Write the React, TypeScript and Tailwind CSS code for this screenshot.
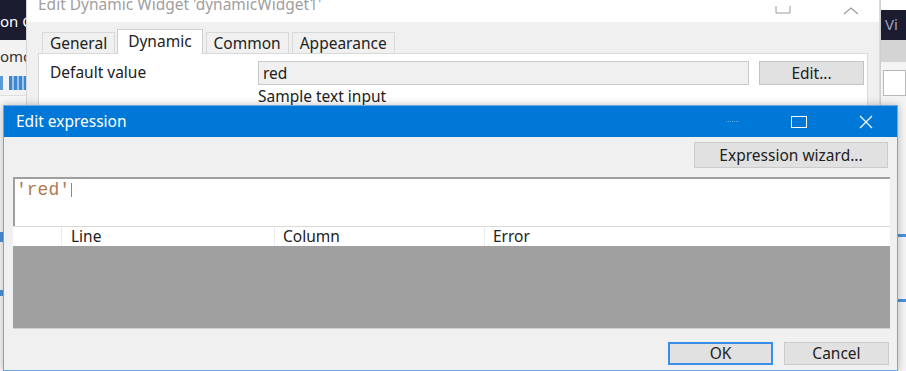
import React from 'react';

const ui = { fontFamily: '"Noto Sans", "Open Sans", Arial, sans-serif' };
const mono = { fontFamily: '"Liberation Mono", "Courier New", monospace' };

const tabs = ['General', 'Dynamic', 'Common', 'Appearance'];

const LeftStrip = () => (
  <div className="w-[27px] shrink-0 flex flex-col border-r border-[#d6d6d6] bg-[#f2f2f2] overflow-hidden">
    <div className="h-[40px] bg-[#1c1c30] flex items-center text-white text-[15px] whitespace-nowrap pt-[2px]">on C</div>
    <div className="h-[8px]" />
    <div className="text-[15px] leading-[16px] text-[#333] whitespace-nowrap">omc</div>
    <div className="h-[12px]" />
    <div className="flex gap-[6px] h-[14px]">
      <div className="w-[3px] bg-[#5b9bd5]" />
      <div className="flex-1 bg-[repeating-linear-gradient(90deg,#3f86d0_0_3px,#9cc3ea_3px_5px)]" />
    </div>
    <div className="flex-1 bg-[#f7f7f7] border-t border-[#e0e0e0] mt-[5px]">
      <div className="mt-[136px] h-[10px] w-[3px] bg-[#4a90d9]" />
      <div className="mt-[48px] h-[6px] w-[3px] bg-[#4a90d9]" />
    </div>
  </div>
);

const RightStrip = () => (
  <div className="w-[26px] shrink-0 flex flex-col bg-[#f4f4f4] overflow-hidden border-l border-[#d0d0d0]">
    <div className="h-[10px] bg-white" />
    <div className="h-[30px] bg-[#1c1c30] text-[#9aa0c0] text-[15px] pl-[4px] pt-[3px] whitespace-nowrap">Vi</div>
    <div className="h-[22px] bg-[#d4d4d4]" />
    <div className="h-[8px]" />
    <div className="h-[26px] ml-[2px] bg-white border border-[#b8b8b8]" />
    <div className="flex-1 flex flex-col items-end">
      <div className="mt-[138px] h-[3px] w-[9px] bg-[#4a90d9]" />
      <div className="mt-[62px] h-[3px] w-[9px] bg-[#4a90d9]" />
    </div>
  </div>
);

const BackDialog = () => (
  <div className="w-[853px] shrink-0 flex flex-col bg-[#f0f0f0] border-r border-[#dcdcdc]">
    <div className="h-[22px] bg-white flex items-start overflow-hidden">
      <div className="pl-[11px] -mt-[6px] text-[15.5px] leading-[20px] text-[#a0a0a0] whitespace-nowrap">Edit Dynamic Widget 'dynamicWidget1'</div>
      <div className="ml-auto flex items-start gap-[52px] pr-[20px]">
        <svg width="16" height="14" viewBox="0 0 16 14">
          <path d="M1 6 V13 H15 V6" fill="none" stroke="#9a9a9a" strokeWidth="1" />
        </svg>
        <svg width="16" height="8" viewBox="0 0 16 8" className="mt-[7px]">
          <path d="M1 7 L8 1 L15 7" fill="none" stroke="#9a9a9a" strokeWidth="1.2" />
        </svg>
      </div>
    </div>
    <div className="flex-1 px-[11px] pt-[6px]">
      <div className="flex items-end h-[25px] pl-[4px]">
        {tabs.map((t) =>
          t === 'Dynamic' ? (
            <div key={t} className="h-[25px] px-[10px] bg-white border border-b-0 border-[#cfcfcf] text-[15.5px] leading-[22px] text-[#222] -mb-px relative z-10 ml-[2px]">
              {t}
            </div>
          ) : (
            <div key={t} className="h-[21px] px-[7px] bg-[#f0f0f0] border border-b-0 border-[#d9d9d9] text-[15.5px] leading-[20px] text-[#222] ml-[3px] first:ml-0">
              {t}
            </div>
          )
        )}
      </div>
      <div className="bg-white border border-[#d9d9d9] h-[60px] flex flex-col">
        <div className="flex items-center pt-[7px]">
          <div className="w-[219px] pl-[11px] text-[15.5px] text-[#222]">Default value</div>
          <div className="w-[491px] h-[24px] bg-[#f0f0f0] border border-[#c9c9c9] text-[15.5px] leading-[22px] pl-[4px] text-[#222]">red</div>
          <div className="ml-[10px] w-[105px] h-[24px] bg-[#e1e1e1] border border-[#c4c4c4] text-[15.5px] leading-[22px] text-center text-[#222]">Edit...</div>
        </div>
        <div className="pl-[219px] pt-[1px] text-[15.5px] leading-[20px] text-[#222]">Sample text input</div>
      </div>
    </div>
  </div>
);

const EditExpression = () => (
  <div className="absolute left-[3px] top-[105px] w-[895px] h-[266px] flex flex-col bg-[#f0f0f0] border border-[#6aa8e4] shadow-[0_0_8px_rgba(0,0,0,0.25)]">
    <div className="h-[31px] shrink-0 bg-[#0078d7] flex items-center text-white">
      <div className="pl-[12px] text-[15.5px]">Edit expression</div>
      <div className="ml-auto flex items-center">
        <div className="w-[13px] border-t border-dotted border-[#5fa3e6] mr-[52px]" />
        <svg width="16" height="12" viewBox="0 0 16 12" className="mr-[52px]">
          <rect x="0.5" y="0.5" width="15" height="11" fill="none" stroke="white" strokeWidth="1" />
        </svg>
        <svg width="14" height="14" viewBox="0 0 14 14" className="mr-[24px]">
          <path d="M1 1 L13 13 M13 1 L1 13" stroke="white" strokeWidth="1.2" />
        </svg>
      </div>
    </div>
    <div className="flex-1 flex flex-col pl-[9px] pr-[7px]">
      <div className="flex justify-end mt-[5px]">
        <div className="w-[194px] h-[26px] bg-[#e1e1e1] border border-[#cccccc] text-[15.5px] leading-[24px] text-center text-[#222] mr-[2px]">
          Expression wizard...
        </div>
      </div>
      <div className="mt-[9px] h-[49px] bg-white border-t-2 border-l-2 border-[#a0a0a0] flex items-start pl-[1px] pt-[2px]">
        <span className="text-[18px] leading-[18px] text-[#b07a52]" style={mono}>'red'</span>
        <span className="w-px h-[14px] bg-[#888] mt-[2px] ml-[1px]" />
      </div>
      <div className="h-[20px] bg-white border-t border-[#dadada] flex text-[15.5px] leading-[19px] text-[#222]">
        <div className="w-[49px] border-r border-[#ececec]" />
        <div className="w-[213px] pl-[9px] border-r border-[#ececec]">Line</div>
        <div className="w-[210px] pl-[8px] border-r border-[#ececec]">Column</div>
        <div className="flex-1 pl-[8px]">Error</div>
      </div>
      <div className="h-[83px] bg-[#a0a0a0] border-b border-[#d0d0d0]" />
      <div className="flex justify-end gap-[11px] mt-[13px] mr-[1px]">
        <div className="w-[105px] h-[23px] bg-[#e1e1e1] border-2 border-[#3a8ee6] text-[15.5px] leading-[19px] text-center text-[#222]">OK</div>
        <div className="w-[105px] h-[23px] bg-[#e1e1e1] border border-[#cccccc] text-[15.5px] leading-[21px] text-center text-[#222]">Cancel</div>
      </div>
    </div>
  </div>
);

export default function App() {
  return (
    <div className="w-[906px] h-[371px] relative overflow-hidden bg-[#f0f0f0]" style={ui}>
      <div className="flex h-full">
        <LeftStrip />
        <BackDialog />
        <RightStrip />
      </div>
      <EditExpression />
    </div>
  );
}
